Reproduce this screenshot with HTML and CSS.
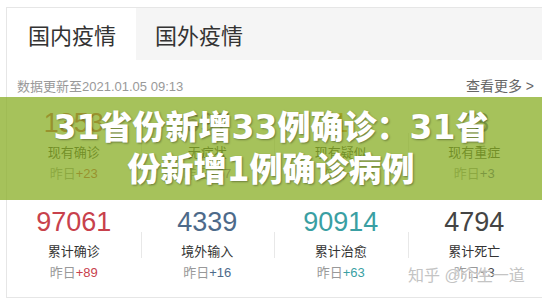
FILE: index.html
```html
<!DOCTYPE html>
<html lang="zh-CN">
<head>
  <meta charset="UTF-8" />
  <meta name="viewport" content="width=device-width, initial-scale=1" />
  <title>31省份新增33例确诊</title>
  <link rel="stylesheet" href="styles.css">
</head>
<body>
  <div class="card">
    <!-- Tabs -->
    <div class="tabs">
      <div class="tab active">国内疫情</div>
      <div class="tab">国外疫情</div>
    </div>

    <div class="meta">
      <span class="update">数据更新至2021.01.05 09:13</span>
      <a href="#" class="more">查看更多 &gt;</a>
    </div>

    <div class="stats">
      <div class="cell">
        <div class="num c-red">1353</div>
        <div class="label">现有确诊</div>
        <div class="sub">昨日<span class="c-red">+23</span></div>
      </div>
      <div class="cell">
        <div class="num c-purple">697</div>
        <div class="label">无症状</div>
        <div class="sub">昨日<span class="c-purple">+57</span></div>
      </div>
      <div class="cell">
        <div class="num c-orange">1</div>
        <div class="label">现有疑似</div>
        <div class="sub">昨日<span class="c-orange">+0</span></div>
      </div>
      <div class="cell">
        <div class="num c-navy">23</div>
        <div class="label">现有重症</div>
        <div class="sub">昨日<span class="c-navy">+3</span></div>
      </div>

      <div class="cell">
        <div class="num c-red">97061</div>
        <div class="label">累计确诊</div>
        <div class="sub">昨日<span class="c-red">+89</span></div>
      </div>
      <div class="cell">
        <div class="num c-slate">4339</div>
        <div class="label">境外输入</div>
        <div class="sub">昨日<span class="c-slate">+16</span></div>
      </div>
      <div class="cell">
        <div class="num c-teal">90914</div>
        <div class="label">累计治愈</div>
        <div class="sub">昨日<span class="c-teal">+63</span></div>
      </div>
      <div class="cell">
        <div class="num c-dark">4794</div>
        <div class="label">累计死亡</div>
        <div class="sub">昨日<span class="c-dark">+3</span></div>
      </div>
    </div>
  </div>

  <!-- Headline banner laid over the first row of stats -->
  <div class="banner">
    <h1>31省份新增33例确诊：31省<br>份新增1例确诊病例</h1>
  </div>

  <div class="watermark">知乎 @介生一道</div>
</body>
</html>
```

FILE: styles.css
```css
:root {
  --border: #e6e6e6;
  --muted: #999;
  --text: #333;
}

body {
  margin: 0;
  background: #fff;
  font-family: "Liberation Sans", "Noto Sans CJK SC", sans-serif;
  color: var(--text);
  position: relative;
  height: 299px;
  overflow: hidden;
}

.card {
  margin: 7px 0 0 6px;
  width: 560px;
  height: 289px;
  border: 1px solid var(--border);
  border-right: none;
  overflow: hidden;
}

/* Tabs */
.tabs {
  display: flex;
  height: 52px;
  background: #f5f5f5;
}

.tab {
  display: flex;
  align-items: center;
  padding: 0 20px 0 21px;
  font-size: 22px;
  color: #333;
}

.tab.active {
  background: #fff;
}

.tab + .tab {
  padding-left: 19px;
}

/* Update line */
.meta {
  display: flex;
  justify-content: space-between;
  align-items: center;
  width: 534px;
  height: 40px;
  padding: 10px 0 0 10px;
  box-sizing: border-box;
  font-size: 13px;
}

.update {
  color: var(--muted);
}

.more {
  color: #666;
  text-decoration: none;
  font-size: 14px;
  margin-right: 7px;
}

/* Stats grid */
.stats {
  display: grid;
  grid-template-columns: repeat(4, 133.5px);
  grid-template-rows: 99px 97px;
}

.cell {
  position: relative;
  display: flex;
  flex-direction: column;
  align-items: center;
  padding-top: 8px;
}

.cell:not(:nth-child(4n + 1))::before {
  content: "";
  position: absolute;
  left: 0;
  top: 33px;
  height: 26px;
  border-left: 1px solid #e8e8e8;
}

.num {
  font-size: 27px;
  line-height: 30px;
}

.label {
  margin-top: 5px;
  font-size: 13px;
  line-height: 20px;
  color: #333;
}

.sub {
  margin-top: 1px;
  font-size: 13px;
  line-height: 20px;
  color: var(--muted);
}

.c-red { color: #c8414c; }
.c-purple { color: #8a5ab0; }
.c-orange { color: #e08a2a; }
.c-navy { color: #545499; }
.c-slate { color: #4d6a8a; }
.c-teal { color: #3a9fa3; }
.c-dark { color: #444; }

/* Headline banner overlay */
.banner {
  position: absolute;
  left: 0;
  top: 97px;
  width: 542px;
  height: 103px;
  background: rgba(136, 174, 36, 0.75);
  display: flex;
  align-items: center;
  justify-content: center;
}

.banner h1 {
  margin: 0;
  font-family: "DejaVu Sans", "Noto Sans CJK SC", sans-serif;
  font-size: 33px;
  font-weight: 900;
  line-height: 42px;
  text-align: center;
  color: #fff;
  text-shadow: 1px 1px 2px rgba(0, 0, 0, 0.35);
}

/* Watermark */
.watermark {
  position: absolute;
  left: 408px;
  top: 262px;
  font-size: 16px;
  color: #c4c4c4;
  text-shadow: 0 0 2px #fff, 0 0 2px #fff;
  white-space: nowrap;
}
```
